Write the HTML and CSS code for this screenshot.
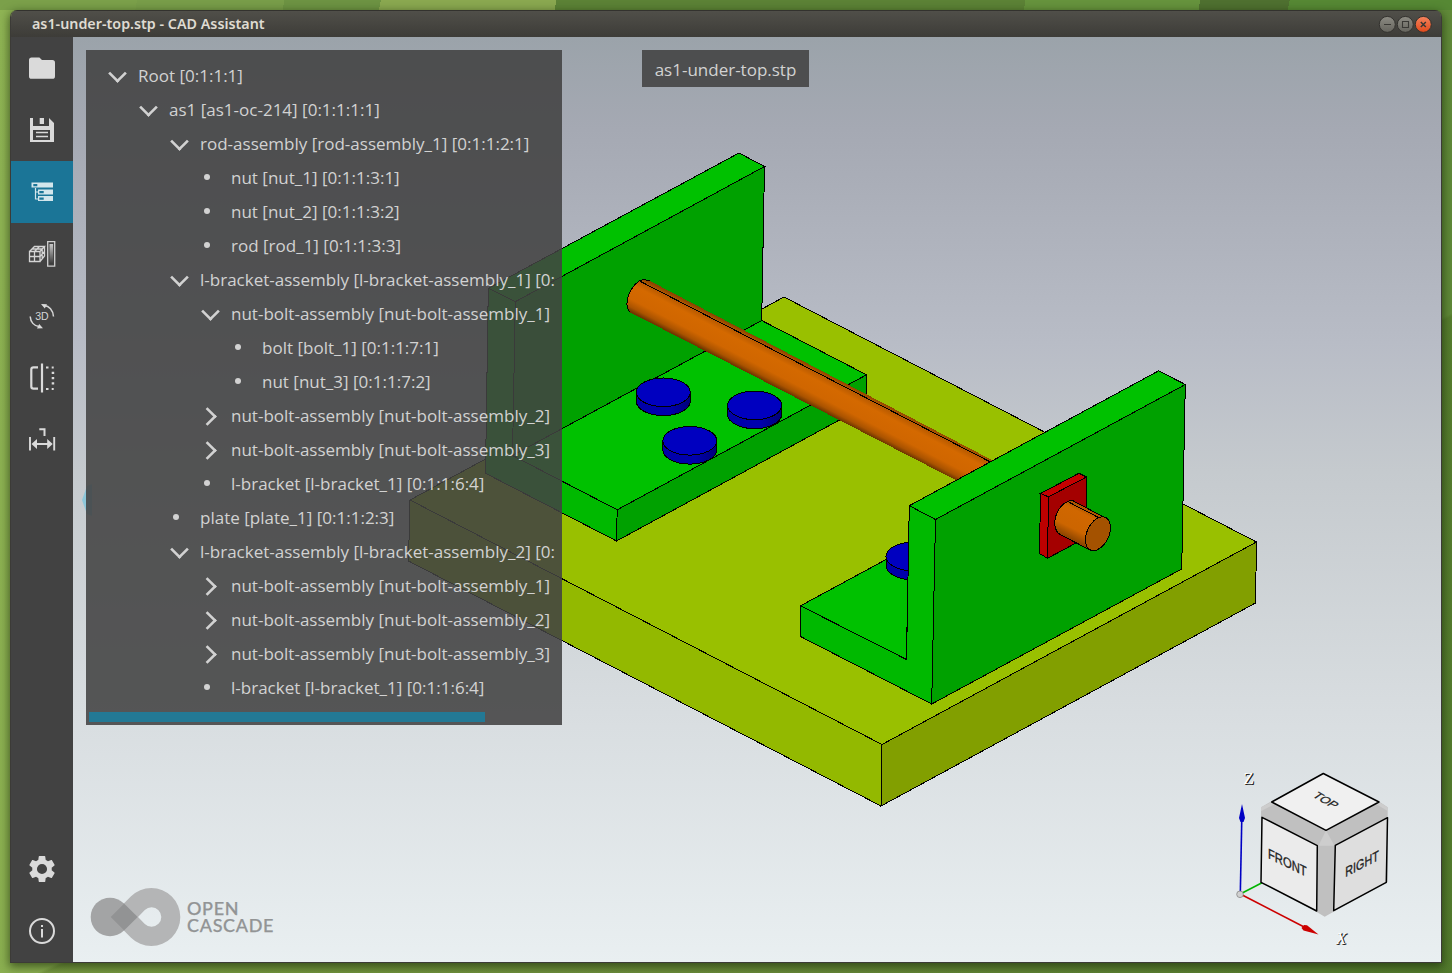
FILE: index.html
```html
<!DOCTYPE html>
<html lang="en">
<head>
<meta charset="utf-8">
<title>as1-under-top.stp - CAD Assistant</title>
<link rel="stylesheet" href="styles.css">
</head>
<body>
<div class="window">
  <header class="titlebar">
    <span class="titlebar-text">as1-under-top.stp - CAD Assistant</span>
    <svg class="window-buttons" width="56" height="20" viewBox="1378 14 56 20">
      <defs>
        <linearGradient id="btn" x1="0" y1="0" x2="0" y2="1"><stop offset="0" stop-color="#8c8b83"/><stop offset="1" stop-color="#65645d"/></linearGradient>
        <linearGradient id="btnClose" x1="0" y1="0" x2="0" y2="1"><stop offset="0" stop-color="#f4845e"/><stop offset="1" stop-color="#e2491a"/></linearGradient>
      </defs>
      <g stroke="#34332f"><circle cx="1387.3" cy="24.4" r="8" fill="url(#btn)"/><circle cx="1405.3" cy="24.4" r="8" fill="url(#btn)"/><circle cx="1423.3" cy="24.4" r="8" fill="url(#btnClose)"/></g>
      <g stroke="#3a3935" stroke-width="1.1" fill="none"><path d="M1384 24.5h7M1402.5 21.5h6v6h-6z"/><path d="M1420.8 22l5 5m0-5l-5 5" stroke-width="1.5"/></g>
    </svg>
  </header>
  <main class="workspace">
    <nav class="sidebar">
      <button class="tool"><svg class="icon" viewBox="0 0 62 62"><path fill="#dadada" d="M20.6 20.5h7.8l2.6 2.6h10.4a2.6 2.6 0 0 1 2.6 2.6v13.5a2.6 2.6 0 0 1-2.6 2.6H20.6a2.6 2.6 0 0 1-2.6-2.6V23.1a2.6 2.6 0 0 1 2.6-2.6z"/></svg></button>
      <button class="tool"><svg class="icon" viewBox="0 0 62 62"><path fill="#dadada" fill-rule="evenodd" d="M19 19h3v8h16v-8l5 5v19H19zM22 31v10h17V31zM28.7 19H33v6h-4.300z"/><path d="M25 33.500h12M25 37.500h12" stroke="#dadada" stroke-width="1.400"/></svg></button>
      <button class="tool tool-active"><svg class="icon" viewBox="0 0 62 62"><path fill="#d3e6ec" fill-rule="evenodd" d="M20.500 21.500h21.500v5H20.500zM22.300 23v2.200h4V23zM27 28.500h15v5H27zM28.300 30v2.200h4.400V30zM27 35h15v5H27zM28.300 36.500v2.200h4.400v-2.200z"/><path d="M24.500 27v11h2.500M24.500 31h2.500" stroke="#d3e6ec" stroke-width="1.200" fill="none"/></svg></button>
      <button class="tool"><svg class="icon" viewBox="0 0 62 62"><defs><linearGradient id="bar" x1="0" y1="0" x2="0" y2="1"><stop offset="0" stop-color="#c8c8c8"/><stop offset="1" stop-color="#3a3a3a"/></linearGradient></defs><path d="M36.700 18.700h7v24.500h-7z" fill="none" stroke="#d0d0d0" stroke-width="1.300"/><path d="M38.500 21h3.600v20h-3.600z" fill="url(#bar)"/><path d="M18.500 28.500h10.500v10H18.500zM18.500 33.500h10.500M23.500 28.500v10M18.500 28.500l5-5h10l-4.500 5M33.500 23.500v9.500l-4.500 5.500M23.500 28.500l5-5M21 26h10M29 33.500l4.500-5M31.200 26v10" fill="none" stroke="#d4d4d4" stroke-width="1.300"/></svg></button>
      <button class="tool"><svg class="icon" viewBox="0 0 62 62"><path d="M33.500 20.500C38 21 42 25 42.500 31.500M28 41.500C23 41 19.500 37 19.200 31.500" fill="none" stroke="#d6d6d6" stroke-width="1.500"/><path d="M30 19l6 .3-2.200 4.200zM32 43.200l-6 .2 2.200-4.300z" fill="#dadada"/><text x="31" y="35" textLength="13.500" lengthAdjust="spacingAndGlyphs" text-anchor="middle" class="icon-label">3D</text></svg></button>
      <button class="tool"><svg class="icon" viewBox="0 0 62 62"><path d="M27 20.300h-4.500q-2.200 0-2.200 2.200v17q0 2.200 2.200 2.200H27M31 16.500v29" fill="none" stroke="#dadada" stroke-width="2.200"/><path d="M35 19.500h2.500v2H35zM40.700 19.500h2v2h-2zM35 41h2.500v2H35zM40.700 41h2v2h-2zM40.700 24.700h2.500v2.200h-2.500zM40.700 30h2.500v2.200h-2.500zM40.700 35.300h2.500v2.200h-2.500z" fill="#dadada"/></svg></button>
      <button class="tool"><svg class="icon" viewBox="0 0 62 62"><path d="M19 28v13.500M43.200 28v13.500" stroke="#dadada" stroke-width="1.900"/><path d="M24 35h14M28.300 20.200h5.200v6.800" fill="none" stroke="#dadada" stroke-width="2"/><path d="M20.500 35l5.500-5v10zM41.700 35l-5.500-5v10z" fill="#dadada"/></svg></button>
      <span class="sidebar-spacer"></span>
      <button class="tool"><svg class="icon" viewBox="0 0 62 62"><g transform="translate(15.400 15.400) scale(1.300)"><path fill="#dadada" d="M19.430 12.980c.04-.32.07-.64.07-.98s-.03-.66-.07-.98l2.110-1.650c.19-.15.24-.42.12-.64l-2-3.460c-.12-.22-.39-.3-.61-.22l-2.490 1c-.52-.4-1.080-.73-1.690-.98l-.38-2.650C14.460 2.180 14.250 2 14 2h-4c-.25 0-.46.18-.49.42l-.38 2.650c-.61.25-1.170.59-1.690.98l-2.490-1c-.23-.09-.49 0-.61.22l-2 3.460c-.13.22-.07.49.12.64l2.110 1.650c-.04.32-.07.65-.07.98s.03.66.07.98l-2.110 1.650c-.19.15-.24.42-.12.64l2 3.460c.12.22.39.3.61.22l2.490-1c.52.4 1.080.73 1.690.98l.38 2.650c.03.24.24.42.49.42h4c.25 0 .46-.18.49-.42l.38-2.650c.61-.25 1.170-.59 1.690-.98l2.490 1c.23.09.49 0 .61-.22l2-3.460c.12-.22.07-.49-.12-.64l-2.110-1.650zM12 15.900a3.900 3.900 0 1 1 0-7.800 3.900 3.900 0 0 1 0 7.800z"/></g></svg></button>
      <button class="tool"><svg class="icon" viewBox="0 0 62 62"><circle cx="31" cy="31" r="12" fill="none" stroke="#dadada" stroke-width="2"/><path d="M30 25h2v2h-2zM30 29h2v8.500h-2z" fill="#dadada"/></svg></button>
    </nav>

    <section class="viewport">
      <svg class="scene" viewBox="73 37 1368 925">
        <defs>
          <linearGradient id="rod" gradientUnits="userSpaceOnUse" x1="800" y1="359.500" x2="783.700" y2="391">
            <stop offset="0" stop-color="#8a4400"/><stop offset=".12" stop-color="#b85a00"/><stop offset=".3" stop-color="#d46900"/><stop offset=".68" stop-color="#d06600"/><stop offset=".88" stop-color="#aa5300"/><stop offset="1" stop-color="#6f3600"/>
          </linearGradient>
          <linearGradient id="stub" gradientUnits="userSpaceOnUse" x1="1090" y1="509" x2="1074" y2="541">
            <stop offset="0" stop-color="#a05000"/><stop offset=".2" stop-color="#d06700"/><stop offset=".7" stop-color="#cc6500"/><stop offset="1" stop-color="#8a4400"/>
          </linearGradient>
          <linearGradient id="rim"><stop offset="0" stop-color="#0000a8"/><stop offset=".6" stop-color="#0000ae"/><stop offset="1" stop-color="#000078"/></linearGradient>
          <g id="bolt"><path d="M-27 0v9a27 14.300 0 0 0 54 0V0z" fill="url(#rim)"/><ellipse rx="27" ry="14.300" fill="#0000c0"/></g>
        </defs>
        <path d="M82 500l5-14 5-2v32l-5-2z" fill="#8cc7da"/>
        <g class="solid">
          <path fill="#99c000" d="M784 297L1256.500 542 882 744.500 410 500z"/>
          <path fill="#93b900" d="M410 500L882 744.500 881 806 408.500 561z"/>
          <path fill="#829f00" d="M882 744.500L1256.500 542 1255.500 603 881 806z"/>

          <path fill="#00c100" d="M739 153L764.500 166.500 515.300 301.700 488.300 288.300z"/>
          <path fill="#00a100" d="M764.500 166.500L761.700 320.500 512.500 455.500 515.300 301.700z"/>
          <path fill="#00c100" d="M761.700 320.500L866.500 374.800 617.200 509.800 512.500 455.500z"/>
          <path fill="#00b900" d="M488.300 288.300L515.300 301.700 512.500 455.500 617.200 509.800 616.500 541 485.500 473.300z"/>
          <path fill="#00a100" d="M617.200 509.800L866.500 374.800 866.200 405.500 616.500 541z"/>
          <use href="#bolt" x="663.300" y="392.300"/><use href="#bolt" x="754.600" y="405.400"/><use href="#bolt" x="689.800" y="440.800"/>
        </g>
        <g shape-rendering="crispEdges">
          <path fill="url(#rod)" d="M643.500 279.300L650 281 1010 469.500V508L630.500 312.500Q624.500 307 628.500 295.500 634 281.500 643.500 279.300z"/>
          <path fill="none" stroke="#000" d="M650 281L643.500 279.300Q634 281.500 628.500 295.500 624.500 307 630.500 312.500M640 281.200L991 462.300"/>
        </g>
        <g class="solid">
          <path fill="#00c100" d="M800.500 605.800L908.300 547.500 906.500 659.500z"/>
          <use href="#bolt" x="913" y="556.500"/>
          <path fill="#00b900" d="M909.300 505.700L935.500 519.500 931.700 704 800.500 636.500V605.800L906.500 659.500z"/>
          <path fill="#00c100" d="M909.300 505.700L1158.700 370.800 1185.300 384.500 935.500 519.500z"/>
          <path fill="#00a100" d="M935.500 519.500L1185.300 384.500 1181.700 569 931.700 704z"/>
          <path fill="#a40000" d="M1048.500 496.800L1086.500 477 1085.500 538 1047.500 558.300z"/>
          <path fill="#c40000" d="M1040.500 493.500L1079 473.200 1086.500 477 1048.500 496.800z"/>
          <path fill="#bc0000" d="M1040.500 493.500L1048.500 496.800 1047.500 558.300 1039.500 553.500z"/>
          <path fill="url(#stub)" d="M1072.500 500.500Q1065 500.500 1059 509 1054 517 1055 526 1056 532 1060 534.500L1091 550.500 1105.500 518z"/>
          <ellipse fill="#a45200" cx="1098" cy="533.700" rx="11" ry="17.900" transform="rotate(25 1098 533.700)"/>
          <path d="M1069.500 502.500L1099.500 518"/>
        </g>

        <g class="axes">
          <path d="M1240.300 894L1262 882.800" stroke="#00b400" stroke-width="1.600"/>
          <path d="M1240.300 894L1242 808" stroke="#0000c4" stroke-width="1.600"/><path fill="#0000c4" d="M1242 804l3 14-1.500 4h-3l-1.500-4z"/>
          <path d="M1240.300 894L1310 930" stroke="#cc0000" stroke-width="1.600"/><path fill="#cc0000" d="M1318.500 934.500l-15-4-2-2.500 2.500-3 3 .3z"/>
          <circle cx="1240" cy="894.300" r="3.300" fill="#d0d0d0" stroke="#888" stroke-width=".8"/>
          <text x="1243.500" y="784" class="axis-label">Z</text><text x="1336" y="944" class="axis-label axis-x">X</text>
        </g>
        <g class="cube">
          <path fill="#c0c0c0" d="M1261 807.300L1271 801.500 1379 801.500 1387.700 807.300V882L1334 911.500 1324.700 916.700 1316.700 912 1261 882z"/>
          <path fill="#cdcdcd" d="M1326 830.500l8.500 15.200h-16zM1261 807.300l10.700-5.300 3 2-13.700 7zM1387.700 807.300L1379 802l-3 2 11.700 7z"/>
          <g stroke="#000" stroke-width="1.500" stroke-linejoin="round">
            <path fill="#f0f0f0" d="M1323.300 773.500L1379 802 1326 830.300 1271.700 802z"/>
            <path fill="#ebebeb" d="M1262 817.300L1317.300 845.700 1316.700 911 1261 882.300z"/>
            <path fill="#dedede" d="M1335.300 845.300L1387.500 817.700 1386.300 882.300 1333.700 910.700z"/>
          </g>
          <text transform="matrix(.85 .49 -.78 .54 1322.500 802.500)" class="face">TOP</text>
          <text transform="matrix(.9 .44 0 1.120 1287.300 867.500)" class="face">FRONT</text>
          <text transform="matrix(.86 -.45 0 1.120 1362 868.500)" class="face">RIGHT</text>
        </g>

        <g class="brand">
          <circle cx="110" cy="917" r="19.300" fill="#a3a4a5"/>
          <path fill="#a3a4a5" d="M123.700 903.300L137.500 917l-13.800 13.700z"/>
          <path fill="#b4b5b6" fill-rule="evenodd" d="M110.500 917l20.300-20.500a29 29 0 1 1 0 41zM138 917l6.800 6.900a9.700 9.700 0 1 0 0-13.800z"/>
          <path fill="#929394" d="M110.500 917L124 903.500 137.700 917 124 930.500z"/>
          <text class="brand-text"><tspan x="187" y="915" textLength="51.500">OPEN</tspan><tspan x="187" y="932" textLength="86.500">CASCADE</tspan></text>
        </g>
      </svg>

      <div class="file-label">as1-under-top.stp</div>

      <aside class="tree-panel">
        <ul class="tree">
          <li class="row level-0 open">Root [0:1:1:1]</li>
          <li class="row level-1 open">as1 [as1-oc-214] [0:1:1:1:1]</li>
          <li class="row level-2 open">rod-assembly [rod-assembly_1] [0:1:1:2:1]</li>
          <li class="row level-3 leaf">nut [nut_1] [0:1:1:3:1]</li>
          <li class="row level-3 leaf">nut [nut_2] [0:1:1:3:2]</li>
          <li class="row level-3 leaf">rod [rod_1] [0:1:1:3:3]</li>
          <li class="row level-2 open">l-bracket-assembly [l-bracket-assembly_1] [0:</li>
          <li class="row level-3 open">nut-bolt-assembly [nut-bolt-assembly_1]</li>
          <li class="row level-4 leaf">bolt [bolt_1] [0:1:1:7:1]</li>
          <li class="row level-4 leaf">nut [nut_3] [0:1:1:7:2]</li>
          <li class="row level-3 closed">nut-bolt-assembly [nut-bolt-assembly_2]</li>
          <li class="row level-3 closed">nut-bolt-assembly [nut-bolt-assembly_3]</li>
          <li class="row level-3 leaf">l-bracket [l-bracket_1] [0:1:1:6:4]</li>
          <li class="row level-2 leaf">plate [plate_1] [0:1:1:2:3]</li>
          <li class="row level-2 open">l-bracket-assembly [l-bracket-assembly_2] [0:</li>
          <li class="row level-3 closed">nut-bolt-assembly [nut-bolt-assembly_1]</li>
          <li class="row level-3 closed">nut-bolt-assembly [nut-bolt-assembly_2]</li>
          <li class="row level-3 closed">nut-bolt-assembly [nut-bolt-assembly_3]</li>
          <li class="row level-3 leaf">l-bracket [l-bracket_1] [0:1:1:6:4]</li>
        </ul>
        <div class="scrollbar"></div>
      </aside>
    </section>
  </main>
</div>
</body>
</html>
```
FILE: styles.css
```css
* { box-sizing: border-box; }

body {
  margin: 0;
  height: 973px;
  padding: 10px;
  overflow: hidden;
  font-family: "Open Sans", "Noto Sans", sans-serif;
  background:
    linear-gradient(100deg, #7ba04a 135px, #789d49 135px 280px, #6d9343 280px 375px, #8aa850 375px 548px, #5c8236 548px 1010px, #66933d 1010px 1182px, #4f7030 1182px 1270px, #568834 1270px) 0 0 / 100% 10px no-repeat,
    linear-gradient(155deg, transparent 60%, rgba(60, 90, 20, .25) 60.2%),
    linear-gradient(100deg, #8fb454 0%, #86aa4c 25%, #7d9f48 50%, #6d9240 72%, #5a8535 100%);
}

.window {
  width: 1432px;
  height: 953px;
  display: flex;
  flex-direction: column;
  border: 1px solid #3c3b37;
  border-top: 0;
  border-radius: 7px 7px 0 0;
  overflow: hidden;
  box-shadow: 0 3px 10px 1px rgba(20, 35, 5, .6);
}

.titlebar {
  height: 27px;
  flex: none;
  display: flex;
  align-items: center;
  justify-content: space-between;
  padding: 0 7px 0 21px;
  background: linear-gradient(#504f49, #3d3c38);
  border-top: 1px solid #33322e;
}

.titlebar-text {
  color: #dfdbd2;
  font: 600 14.3px/26px "Noto Sans", sans-serif;
  white-space: nowrap;
}

.window-buttons { display: block; }

.workspace { flex: 1; display: flex; min-height: 0; }

.sidebar {
  width: 62px;
  flex: none;
  display: flex;
  flex-direction: column;
  background: #424242;
}

.tool {
  width: 62px;
  height: 62px;
  flex: none;
  padding: 0;
  border: 0;
  background: none;
}

.tool-active { background: #1b7597; }
.icon { display: block; width: 62px; height: 62px; }
.icon-label { font: 11.5px "Liberation Sans", sans-serif; fill: #d6d6d6; }
.sidebar-spacer { flex: 1; }

.viewport {
  position: relative;
  flex: 1;
  overflow: hidden;
  background: linear-gradient(#9ba3aa 0%, #a5a9b3 10%, #b8bcc6 33%, #c5cace 47%, #d8dde0 73%, #e9eff1 100%);
}

.scene { display: block; width: 1368px; height: 925px; }
.solid { stroke: #000; stroke-width: 1; shape-rendering: crispEdges; }
.face { font: 12.5px "Liberation Sans", sans-serif; text-anchor: middle; fill: #222; stroke: #222; stroke-width: .3; }
.axis-label { font: 17px "Liberation Serif", serif; fill: #fff; text-shadow: 1px 1px 0 #222, 1px 0 0 #333; }
.axis-x { font-style: italic; }
.brand-text { font: 500 18px Lato, sans-serif; fill: #929495; stroke: #929495; stroke-width: .25; }

.file-label {
  position: absolute;
  left: 569px;
  top: 13px;
  width: 167px;
  height: 37px;
  line-height: 40px;
  text-align: center;
  font-size: 17px;
  color: #d2d2d2;
  background: rgba(66, 66, 66, .88);
}

.tree-panel {
  position: absolute;
  left: 13px;
  top: 13px;
  width: 476px;
  height: 675px;
  padding-top: 9px;
  background: rgba(66, 66, 66, .88);
}

.tree { margin: 0; padding: 0; list-style: none; }

.row {
  position: relative;
  height: 34px;
  line-height: 33px;
  font-size: 17.03px;
  color: #d2d2d2;
  white-space: nowrap;
}

.level-0 { margin-left: 52px; }
.level-1 { margin-left: 83px; }
.level-2 { margin-left: 114px; }
.level-3 { margin-left: 145px; }
.level-4 { margin-left: 176px; }

.row::before { content: ""; position: absolute; }

.open::before,
.closed::before {
  width: 12px;
  height: 12px;
  border: solid #d2d2d2;
  border-width: 0 3px 3px 0;
}

.open::before { left: -28.5px; top: 6.5px; transform: rotate(45deg) scale(.88); }
.closed::before { left: -31.5px; top: 10px; transform: rotate(-45deg) scale(.88); }

.leaf::before {
  left: -27.3px;
  top: 12.7px;
  width: 6.5px;
  height: 6.5px;
  border-radius: 50%;
  background: #d2d2d2;
}

.scrollbar { width: 396px; height: 10px; margin: 7px 0 0 3px; background: #237995; }
```
